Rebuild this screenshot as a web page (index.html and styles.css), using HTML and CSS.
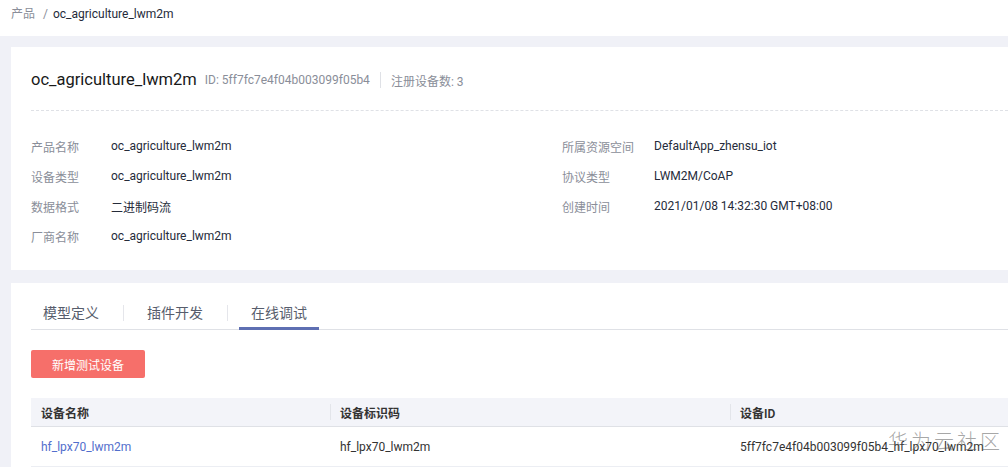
FILE: index.html
```html
<!DOCTYPE html>
<html lang="zh-CN">
<head>
<meta charset="utf-8">
<title>oc_agriculture_lwm2m</title>
<link rel="stylesheet" href="styles.css">
</head>
<body>
<header class="crumbs">
  <span class="crumb-parent">产品</span>
  <span class="crumb-sep">/</span>
  <span class="crumb-current">oc_agriculture_lwm2m</span>
</header>
<main class="main">
  <section class="card card-info">
    <div class="title-row">
      <h1 class="title">oc_agriculture_lwm2m</h1>
      <span class="meta">ID: 5ff7fc7e4f04b003099f05b4</span>
      <span class="meta-sep"></span>
      <span class="meta">注册设备数: 3</span>
    </div>
    <div class="info-grid">
      <div class="info-col">
        <span class="label">产品名称</span><span class="value">oc_agriculture_lwm2m</span>
        <span class="label">设备类型</span><span class="value">oc_agriculture_lwm2m</span>
        <span class="label">数据格式</span><span class="value">二进制码流</span>
        <span class="label">厂商名称</span><span class="value">oc_agriculture_lwm2m</span>
      </div>
      <div class="info-col">
        <span class="label">所属资源空间</span><span class="value">DefaultApp_zhensu_iot</span>
        <span class="label">协议类型</span><span class="value">LWM2M/CoAP</span>
        <span class="label">创建时间</span><span class="value">2021/01/08 14:32:30 GMT+08:00</span>
      </div>
    </div>
  </section>
  <section class="card card-tabs">
    <nav class="tabs">
      <span class="tab">模型定义</span>
      <span class="tab-sep"></span>
      <span class="tab">插件开发</span>
      <span class="tab-sep"></span>
      <span class="tab active">在线调试</span>
    </nav>
    <div class="toolbar">
      <button class="btn-primary">新增测试设备</button>
    </div>
    <div class="table">
      <div class="thead">
        <div class="th c1">设备名称</div>
        <div class="th c2">设备标识码</div>
        <div class="th c3">设备ID</div>
      </div>
      <div class="trow">
        <div class="td c1"><a class="link">hf_lpx70_lwm2m</a></div>
        <div class="td c2">hf_lpx70_lwm2m</div>
        <div class="td c3">5ff7fc7e4f04b003099f05b4_hf_lpx70_lwm2m</div>
      </div>
    </div>
  </section>
</main>
<div class="watermark">华为云社区</div>
</body>
</html>
```
FILE: styles.css
```css
* { box-sizing: border-box; }
html, body { margin: 0; padding: 0; }
body {
  width: 1008px;
  height: 467px;
  overflow: hidden;
  background: #f0f1f7;
  font-family: Roboto, "Noto Sans CJK SC", sans-serif;
  font-size: 12px;
  color: #252b3a;
  position: relative;
}
.crumbs {
  height: 36px;
  background: #fff;
  display: flex;
  align-items: center;
  padding-left: 11px;
  font-size: 12px;
  line-height: 16px;
  padding-bottom: 8px;
}
.crumb-parent { color: #8a8e99; }
.crumb-sep { color: #8a8e99; margin: 0 5px 0 8px; }
.crumb-current { color: #252b3a; }
.main {
  padding: 11px 0 0 11px;
  display: flex;
  flex-direction: column;
  gap: 13px;
}
.card { background: #fff; }
.card-info {
  height: 223px;
  padding: 21px 0 0 20px;
}
.title-row {
  display: flex;
  align-items: center;
  height: 24px;
  margin-bottom: 18px;
}
.title {
  margin: 0 8px 0 0;
  font-size: 16.5px;
  font-weight: 400;
  color: #191919;
  line-height: 24px;
}
.meta { color: #8a8e99; font-size: 12px; }
.meta-sep {
  width: 1px;
  height: 16px;
  background: #dfe1e6;
  margin: 0 10px;
}
.info-grid {
  display: grid;
  grid-template-columns: 531px 1fr;
  padding-top: 20px;
  border-top: 1px dashed #dfe1e6;
}
.info-col {
  display: grid;
  grid-template-columns: minmax(80px, max-content) 1fr;
  grid-auto-rows: 30px;
  align-items: center;
  align-content: start;
}
.label {
  padding-right: 20px;
  color: #8a8e99;
}
.value { color: #252b3a; }
.card-tabs {
  padding: 14px 0 0 20px;
  height: 200px;
}
.tabs {
  display: flex;
  align-items: center;
  height: 33px;
  border-bottom: 1px solid #dfe1e6;
}
.tab {
  width: 80px;
  height: 33px;
  display: flex;
  align-items: center;
  justify-content: center;
  font-size: 14px;
  color: #575d6c;
  position: relative;
  padding-bottom: 2px;
}
.tab.active::after {
  content: "";
  position: absolute;
  left: 0;
  right: 0;
  bottom: 0;
  height: 3px;
  background: #5e6fb2;
}
.tab-sep {
  width: 1px;
  height: 16px;
  background: #e5e6eb;
  margin: 0 11px 0 12px;
}
.toolbar { padding-top: 20px; }
.btn-primary {
  width: 114px;
  height: 28px;
  border: 0;
  border-radius: 2px;
  background: #f66f6a;
  color: #fff;
  font-family: inherit;
  font-size: 12px;
  padding: 0;
}
.table { margin-top: 20px; }
.thead {
  display: flex;
  height: 29px;
  background: #f3f4f9;
  border-bottom: 1px solid #dfe1e6;
}
.th {
  display: flex;
  align-items: center;
  padding-left: 10px;
  font-weight: 600;
  color: #333;
  position: relative;
}
.th + .th::before {
  content: "";
  position: absolute;
  left: 0;
  top: 6px;
  bottom: 6px;
  width: 1px;
  background: #e3e5ea;
}
.c1 { width: 299px; }
.c2 { width: 400px; }
.c3 { flex: 1; }
.trow {
  display: flex;
  height: 40px;
  border-bottom: 1px solid #eceef3;
}
.td {
  display: flex;
  align-items: center;
  padding-left: 10px;
  color: #333;
}
.link { color: #526ecc; text-decoration: none; }
.watermark {
  position: absolute;
  left: 888px;
  top: 426px;
  font-size: 20px;
  letter-spacing: 3px;
  color: rgba(90, 90, 90, 0.55);
  font-family: "Noto Sans CJK SC", sans-serif;
  font-weight: 300;
}
```
